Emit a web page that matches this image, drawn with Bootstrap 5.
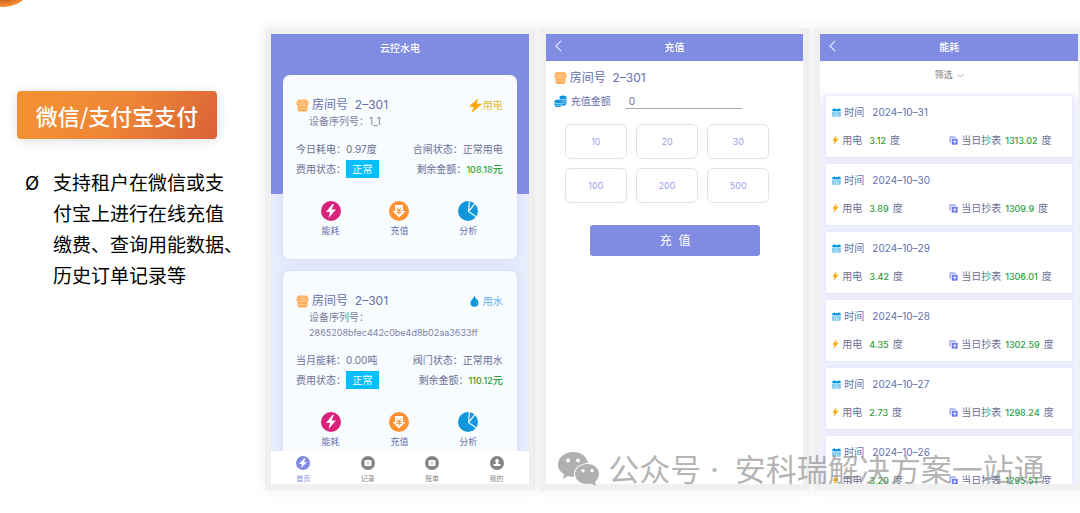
<!DOCTYPE html>
<html lang="zh-CN">
<head>
<meta charset="utf-8">
<meta name="viewport" content="width=device-width, initial-scale=1">
<title>微信/支付宝支付</title>
<link href="https://cdn.jsdelivr.net/npm/bootstrap@5.3.0/dist/css/bootstrap.min.css" rel="stylesheet">
<style>
  :root { --brand: #808ce2; --ink: #6b6f96; --title: #6470ad; --ok: #2f9e3a; }
  body { font-family: Inter, "Noto Sans CJK SC", sans-serif; font-size: 10px; line-height: 20px; color: var(--ink); background: #fff; }
  svg { display: block; flex: none; }
  .stage { height: 100vh; min-height: 420px; padding: 34px 2px 29px 0; }
  .intro { width: 25.15%; padding: 57px 0 0 17px; font-family: "Noto Sans CJK SC", sans-serif; color: #000; }
  .ribbon { width: 200px; font-size: 22px; line-height: 48px; font-weight: 500; color: #fff; border-radius: 4px;
    background: linear-gradient(125deg, #f39035 15%, #ee8536 50%, #d96238); box-shadow: 0 2px 12px rgba(0,0,0,.13); }
  .points { font-size: 19px; line-height: 31px; margin: 27px 0 0 8px; }
  .points .mark-col { width: 28px; }
  .orb { left: -29px; top: -57px; width: 64px; height: 64px; border-radius: 50%; background: radial-gradient(circle closest-side, #c9601f 78%, #f0872c 92%); }
  .screens { gap: 17px; min-width: 0; }
  .phone { flex: 1 1 0; min-width: 0; background: #fff; box-shadow: 0 0 1px 6px #f0f0f0, 0 0 12px 8px rgba(0,0,0,.05); }
  .clip { overflow: hidden; min-height: 0; }
  .bar { background: var(--brand); color: #fff; line-height: 27px; }
  .bar h2, .home h1 { font-size: 10px; font-weight: 500; line-height: inherit; }
  .back { left: 8px; top: 6px; color: #fff; line-height: 1; }
  .home { background: linear-gradient(var(--brand) 160px, #e8eefc 160px); }
  .home h1 { line-height: 28px; padding-bottom: 13px; color: #fff; }
  .meter { background: #f9fcff; border-radius: 7px; margin: 0 12px; padding: 21px 14px 20px 13px; box-shadow: 0 0 12px rgba(128,140,226,.22); }
  .meter + .meter { margin-top: 12px; }
  .room { font-size: 12px; line-height: 18px; color: var(--title); gap: 3px; }
  .kind { font-size: 10px; }
  .serial { padding-left: 13px; margin-bottom: 10px; color: #7d819f; }
  .serial div { height: 15px; line-height: 15px; }
  .num { line-height: 1; }
  .line { height: 20px; }
  .state { background: #00bfff; color: #fff; width: 33px; line-height: 18px; }
  .green, .code { font-size: 9px; }
  .green, .yuan { color: var(--ok); font-weight: 500; }
  .acts { margin-top: 22px; height: 38px; }
  .acts a, .tabs a { flex: 1 1 0; text-decoration: none; color: var(--title); }
  .acts a { font-size: 9px; line-height: 14px; }
  .acts svg { margin: 0 auto 3px; }
  .tabs { background: #fff; padding-top: 5px; height: 33px; }
  .tabs a { font-size: 7px; line-height: 10px; color: #888; }
  .tabs a.active { color: var(--brand); }
  .amount { width: 117px; height: 16px; border: 0; border-bottom: 1px solid #aaa; border-radius: 0; padding: 0 4px; font-size: 10px; color: var(--title); margin-left: 14px; outline: 0; background: none; }
  .choices { display: grid; grid-template-columns: repeat(3, 1fr); gap: 9px; padding: 0 34px 0 19px; margin-top: 13px; }
  .choices .btn { height: 35px; padding: 0; font-size: 9px; color: #9aa4ea; border: 1px solid #e3e3e3; border-radius: 6px; background: #fff; }
  .pay { margin: 22px 43px 0 44px; padding: 0; line-height: 31px; font-size: 12px; color: #fff; background: var(--brand); border: 0; border-radius: 3px; }
  .filter { font-size: 9px; line-height: 28px; color: #777; background: none; border: 0; padding: 0; }
  .log { background: linear-gradient(#fff, #f0f1fe 20px); padding: 7px 6px 0; }
  .day { background: #fff; margin-bottom: 7px; height: 61px; padding: 6px; box-shadow: 0 0 4px 1px #e4e4fb; }
  .day svg { margin-right: 3px; }
  .day .when { color: var(--title); margin-bottom: 8px; }
  .day .green { margin: 0 4px; }
  .day .use { margin-left: 7px; }
  .watermark { left: 51.7%; bottom: 22px; color: rgba(132,132,132,.62); font: 400 31px/42px "Noto Sans CJK SC", sans-serif; pointer-events: none; }
  .dot { font-family: Inter, sans-serif; }
</style>
</head>
<body>
<svg width="0" height="0" class="position-absolute" aria-hidden="true">
  <symbol id="i-room" viewBox="0 0 26 26"><path fill="#ffad57" d="M5 1h16l4 5v5l-2 2v9l-3 3H6l-3-3v-9l-2-2V6z"/><path stroke="#fff0dc" stroke-width="1" fill="none" d="M2 8h22M4 13h18M5 19h16M8 4h10M10 10v2M16 10v2"/></symbol>
  <symbol id="i-bolt" viewBox="0 0 26 26"><path fill="#f9a806" d="M18 0 1 15h9L6 26 25 10H15z"/></symbol>
  <symbol id="i-spark" viewBox="0 0 18 26"><path fill="#f9a806" d="M12 0 1 15h6L4 26 17 10h-7z"/></symbol>
  <symbol id="i-drop" viewBox="0 0 20 26"><path fill="#1296db" d="M10 0C9 7 1 11 1 17a9 9 0 0 0 18 0C19 11 11 7 10 0z"/><path stroke="#bfe4f7" stroke-width="1.500" fill="none" d="M13 21q2-1 2-4"/></symbol>
  <symbol id="i-energy" viewBox="0 0 40 40"><circle cx="20" cy="20" r="20" fill="#d8227b"/><path fill="#fff" d="M23 6 10 22h8l-3 12 15-17h-9l5-11z"/></symbol>
  <symbol id="i-topup" viewBox="0 0 40 40"><circle cx="20" cy="20" r="20" fill="#ff9130"/><path fill="#fff" d="M12 8h16v12h5L20 33 7 20h5z"/><path stroke="#ff9130" stroke-width="2" fill="none" d="m15 13 5 5 5-5M15 19h10M15 23h10M20 18v9"/></symbol>
  <symbol id="i-pie" viewBox="0 0 40 40"><circle cx="20" cy="20" r="20" fill="#1296db"/><path stroke="#e6f5fc" stroke-width="2.500" fill="none" d="M23 0 21 21 37 32M21 21 34 5"/></symbol>
  <symbol id="i-home" viewBox="0 0 28 28"><circle cx="14" cy="14" r="14" fill="#808ce2"/><path fill="#fff" d="M16 5 6 16h6l-2 8 12-12h-6l3-7z"/></symbol>
  <symbol id="i-record" viewBox="0 0 28 28"><circle cx="14" cy="14" r="14" fill="#848484"/><rect x="7" y="8" width="14" height="12" rx="2" fill="#fff"/><path stroke="#aaa" stroke-width="1.500" d="M11 13h6M11 16h6"/></symbol>
  <symbol id="i-me" viewBox="0 0 28 28"><circle cx="14" cy="14" r="14" fill="#848484"/><path fill="#fff" d="M14 6a4 4 0 0 1 3 6l-1 4h5v4H7v-4h5l-1-4a4 4 0 0 1 3-6z"/></symbol>
  <symbol id="i-coins" viewBox="0 0 26 26"><g fill="#1296db"><ellipse cx="18" cy="5" rx="7" ry="4"/><path d="M11 7q7 5 14 0v11q-3 4-8 4z"/><ellipse cx="8" cy="13" rx="7" ry="4"/><path d="M1 15q7 5 14 0v7q-7 5-14 0z"/></g><path stroke="#e2f3fc" stroke-width="1" fill="none" d="M11 8q7 4 14 0M15 13q6 1 10-2M16 17q5 1 9-2M1 16q7 4 14 0M1 20q7 4 14 0"/></symbol>
  <symbol id="i-cal" viewBox="0 0 26 26"><path fill="#1296db" d="M1 3h4V1h3v2h10V1h3v2h4v6H1z"/><path fill="#5cbbe9" d="M1 10h24v15H1z"/><path stroke="#fff" stroke-width="1" d="M4 14h18M4 18h18M4 22h18M8 12v12M13 12v12M18 12v12"/></symbol>
  <symbol id="i-meter" viewBox="0 0 26 26"><path fill="#aab2f2" d="M1 1h18v5H6v13H1z"/><path fill="#6c7be6" d="M8 8h17v17H8z"/><path stroke="#fff" stroke-width="2.500" d="M12 16.500h9M16.500 12v9"/></symbol>
  <symbol id="i-back" viewBox="0 0 10 14"><path fill="none" stroke="#e9ebfb" stroke-width="1.300" d="M8 1 2 7l6 6"/></symbol>
</svg>

<main class="stage d-flex position-relative overflow-hidden">
  <div class="orb position-absolute"></div>
  <section class="intro flex-shrink-0">
    <div class="ribbon text-center">微信/支付宝支付</div>
    <div class="points d-flex text-nowrap">
      <span class="mark-col">Ø</span>
      <p class="m-0">支持租户在微信或支<br>付宝上进行在线充值<br>缴费、查询用能数据、<br>历史订单记录等</p>
    </div>
  </section>

  <div class="screens d-flex flex-grow-1">
    <section class="phone d-flex flex-column text-nowrap">
      <div class="home clip flex-grow-1">
        <h1 class="text-center m-0">云控水电</h1>
        <article class="meter">
          <div class="d-flex align-items-center room"><svg width="13" height="13"><use href="#i-room"/></svg><span>房间号&nbsp; 2–301</span>
            <span class="kind ms-auto d-flex align-items-center" style="color:#e3bd2b"><svg width="15" height="15"><use href="#i-bolt"/></svg>用电</span></div>
          <div class="serial"><div>设备序列号：1_1</div></div>
          <div class="line d-flex justify-content-between"><span>今日耗电：<span class="num">0.97</span>度</span><span>合闸状态：正常用电</span></div>
          <div class="line d-flex justify-content-between align-items-center"><span class="d-flex align-items-center">费用状态：<span class="state text-center">正常</span></span><span>剩余金额：<span class="num green">108.18</span><span class="yuan">元</span></span></div>
          <nav class="acts d-flex text-center">
            <a href="#"><svg width="20" height="20"><use href="#i-energy"/></svg>能耗</a>
            <a href="#"><svg width="20" height="20"><use href="#i-topup"/></svg>充值</a>
            <a href="#"><svg width="20" height="20"><use href="#i-pie"/></svg>分析</a>
          </nav>
        </article>
        <article class="meter">
          <div class="d-flex align-items-center room"><svg width="13" height="13"><use href="#i-room"/></svg><span>房间号&nbsp; 2–301</span>
            <span class="kind ms-auto d-flex align-items-center" style="color:#62adf2"><svg class="me-1" width="9" height="12"><use href="#i-drop"/></svg>用水</span></div>
          <div class="serial"><div>设备序列号：</div><div class="code">2865208bfec442c0be4d8b02aa3633ff</div></div>
          <div class="line d-flex justify-content-between"><span>当月能耗：<span class="num">0.00</span>吨</span><span>阀门状态：正常用水</span></div>
          <div class="line d-flex justify-content-between align-items-center"><span class="d-flex align-items-center">费用状态：<span class="state text-center">正常</span></span><span>剩余金额：<span class="num green">110.12</span><span class="yuan">元</span></span></div>
          <nav class="acts d-flex text-center">
            <a href="#"><svg width="20" height="20"><use href="#i-energy"/></svg>能耗</a>
            <a href="#"><svg width="20" height="20"><use href="#i-topup"/></svg>充值</a>
            <a href="#"><svg width="20" height="20"><use href="#i-pie"/></svg>分析</a>
          </nav>
        </article>
      </div>
      <nav class="tabs d-flex text-center flex-shrink-0">
        <a class="active" href="#"><svg class="mx-auto mb-1" width="14" height="14"><use href="#i-home"/></svg>首页</a>
        <a href="#"><svg class="mx-auto mb-1" width="14" height="14"><use href="#i-record"/></svg>记录</a>
        <a href="#"><svg class="mx-auto mb-1" width="14" height="14"><use href="#i-record"/></svg>账单</a>
        <a href="#"><svg class="mx-auto mb-1" width="14" height="14"><use href="#i-me"/></svg>我的</a>
      </nav>
    </section>

    <section class="phone text-nowrap">
      <header class="bar position-relative text-center"><a class="back position-absolute" href="#" aria-label="返回"><svg width="9" height="12"><use href="#i-back"/></svg></a><h2 class="m-0">充值</h2></header>
      <form>
        <div class="d-flex align-items-center room px-2 mt-2"><svg width="13" height="14"><use href="#i-room"/></svg><span>房间号&nbsp; 2–301</span></div>
        <div class="d-flex align-items-center px-2 mt-1"><svg width="13" height="13"><use href="#i-coins"/></svg><label class="ms-1" for="amount" style="color:var(--title)">充值金额</label><input class="amount" id="amount" type="text" value="0"></div>
        <div class="choices">
          <button type="button" class="btn">10</button><button type="button" class="btn">20</button><button type="button" class="btn">30</button>
          <button type="button" class="btn">100</button><button type="button" class="btn">200</button><button type="button" class="btn">500</button>
        </div>
        <div class="d-flex"><button type="button" class="btn pay flex-grow-1">充&nbsp; 值</button></div>
      </form>
    </section>

    <section class="phone d-flex flex-column text-nowrap">
      <header class="bar position-relative text-center"><a class="back position-absolute" href="#" aria-label="返回"><svg width="9" height="12"><use href="#i-back"/></svg></a><h2 class="m-0">能耗</h2></header>
      <button type="button" class="filter d-flex align-items-center justify-content-center">筛选<svg class="ms-1" width="7" height="5" viewBox="0 0 14 8"><path fill="none" stroke="#999" stroke-width="1.500" d="m1 1 6 6 6-6"/></svg></button>
      <div class="log clip flex-grow-1">
        <article class="day"><div class="d-flex align-items-center when"><svg width="9" height="9"><use href="#i-cal"/></svg>时间<span class="num ms-2">2024–10–31</span></div><div class="row g-0"><div class="col-6 d-flex align-items-center"><svg width="7" height="10"><use href="#i-spark"/></svg>用电<span class="num green use">3.12</span>度</div><div class="col-6 d-flex align-items-center"><svg width="9" height="9"><use href="#i-meter"/></svg>当日抄表<span class="num green">1313.02</span>度</div></div></article>
        <article class="day"><div class="d-flex align-items-center when"><svg width="9" height="9"><use href="#i-cal"/></svg>时间<span class="num ms-2">2024–10–30</span></div><div class="row g-0"><div class="col-6 d-flex align-items-center"><svg width="7" height="10"><use href="#i-spark"/></svg>用电<span class="num green use">3.89</span>度</div><div class="col-6 d-flex align-items-center"><svg width="9" height="9"><use href="#i-meter"/></svg>当日抄表<span class="num green">1309.9</span>度</div></div></article>
        <article class="day"><div class="d-flex align-items-center when"><svg width="9" height="9"><use href="#i-cal"/></svg>时间<span class="num ms-2">2024–10–29</span></div><div class="row g-0"><div class="col-6 d-flex align-items-center"><svg width="7" height="10"><use href="#i-spark"/></svg>用电<span class="num green use">3.42</span>度</div><div class="col-6 d-flex align-items-center"><svg width="9" height="9"><use href="#i-meter"/></svg>当日抄表<span class="num green">1306.01</span>度</div></div></article>
        <article class="day"><div class="d-flex align-items-center when"><svg width="9" height="9"><use href="#i-cal"/></svg>时间<span class="num ms-2">2024–10–28</span></div><div class="row g-0"><div class="col-6 d-flex align-items-center"><svg width="7" height="10"><use href="#i-spark"/></svg>用电<span class="num green use">4.35</span>度</div><div class="col-6 d-flex align-items-center"><svg width="9" height="9"><use href="#i-meter"/></svg>当日抄表<span class="num green">1302.59</span>度</div></div></article>
        <article class="day"><div class="d-flex align-items-center when"><svg width="9" height="9"><use href="#i-cal"/></svg>时间<span class="num ms-2">2024–10–27</span></div><div class="row g-0"><div class="col-6 d-flex align-items-center"><svg width="7" height="10"><use href="#i-spark"/></svg>用电<span class="num green use">2.73</span>度</div><div class="col-6 d-flex align-items-center"><svg width="9" height="9"><use href="#i-meter"/></svg>当日抄表<span class="num green">1298.24</span>度</div></div></article>
        <article class="day"><div class="d-flex align-items-center when"><svg width="9" height="9"><use href="#i-cal"/></svg>时间<span class="num ms-2">2024–10–26</span></div><div class="row g-0"><div class="col-6 d-flex align-items-center"><svg width="7" height="10"><use href="#i-spark"/></svg>用电<span class="num green use">3.20</span>度</div><div class="col-6 d-flex align-items-center"><svg width="9" height="9"><use href="#i-meter"/></svg>当日抄表<span class="num green">1295.51</span>度</div></div></article>
      </div>
    </section>
  </div>

  <div class="watermark position-absolute d-flex align-items-center text-nowrap">
    <svg class="me-2" width="42" height="34" viewBox="0 0 42 34"><path fill-rule="evenodd" fill="#b0b0b0" d="M15 0c8 0 14 4.500 15 11-8 0-14 5-14 11v3q-4 0-6-1l-5 3 1-5C2 20 0 17 0 13 0 5.500 6.500 0 15 0zM10 6.500a2 2 0 1 0 .1 0zm10 0a2 2 0 1 0 .1 0z"/><path fill-rule="evenodd" fill="#b0b0b0" d="M29.500 12C36 12 41 16.500 41 22c0 3.500-2 6-4 8l1 4-5-2.500c-9 2-16-3-16-9.500 0-5.500 5.500-10 12.500-10zM25 17a1.700 1.700 0 1 0 .1 0zm9 0a1.700 1.700 0 1 0 .1 0z"/></svg>
    <span>公众号<span class="dot">&nbsp;·&nbsp;</span> 安科瑞解决方案一站通</span>
  </div>
</main>
<script src="https://cdn.jsdelivr.net/npm/bootstrap@5.3.0/dist/js/bootstrap.bundle.min.js"></script>
</body>
</html>
